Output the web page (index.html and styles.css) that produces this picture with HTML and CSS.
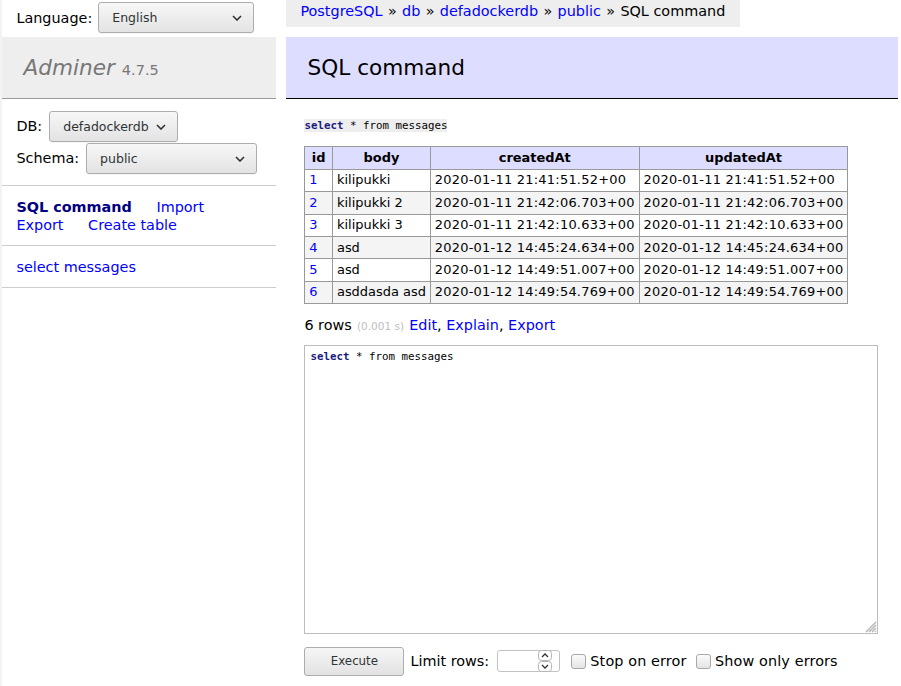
FILE: index.html
```html
<!DOCTYPE html>
<html lang="en">
<head>
<meta charset="utf-8">
<title>SQL command - defadockerdb - Adminer</title>
<link rel="stylesheet" href="styles.css">
</head>
<body>
<div class="page">
  <aside class="menu">
    <div class="lang">
      <span class="lang-label">Language:</span>
      <span class="select-wrap select-lang">
        <select><option>English</option></select>
        <svg class="chev" width="10" height="6" viewBox="0 0 10 6"><path d="M1 1 L5 5 L9 1" fill="none" stroke="#2e3436" stroke-width="1.6"/></svg>
      </span>
    </div>
    <h1 class="logo"><span class="logo-name">Adminer</span> <span class="version">4.7.5</span></h1>
    <div class="dbs">
      <div class="dbs-row"><span>DB:</span>
        <span class="select-wrap select-db">
          <select><option>defadockerdb</option></select>
          <svg class="chev" width="10" height="6" viewBox="0 0 10 6"><path d="M1 1 L5 5 L9 1" fill="none" stroke="#2e3436" stroke-width="1.6"/></svg>
        </span>
      </div>
      <div class="dbs-row"><span>Schema:</span>
        <span class="select-wrap select-schema">
          <select><option>public</option></select>
          <svg class="chev" width="10" height="6" viewBox="0 0 10 6"><path d="M1 1 L5 5 L9 1" fill="none" stroke="#2e3436" stroke-width="1.6"/></svg>
        </span>
      </div>
    </div>
    <p class="links"><a href="#" class="active">SQL command</a> <a href="#">Import</a> <a href="#">Export</a> <a href="#">Create table</a></p>
    <ul class="tables"><li><a href="#">select</a> <a href="#">messages</a></li></ul>
  </aside>

  <main class="content">
    <div class="breadcrumb"><a href="#">PostgreSQL</a> <span class="sep">»</span> <a href="#">db</a> <span class="sep">»</span> <a href="#">defadockerdb</a> <span class="sep">»</span> <a href="#">public</a> <span class="sep">»</span> SQL command</div>
    <h2 class="title">SQL command</h2>
    <div class="body">
      <pre class="sql"><code><span class="kw">select</span> * from messages</code></pre>
      <table class="result">
        <thead>
          <tr><th>id</th><th>body</th><th>createdAt</th><th>updatedAt</th></tr>
        </thead>
        <tbody>
          <tr><td><a href="#">1</a></td><td>kilipukki</td><td class="date">2020-01-11 21:41:51.52+00</td><td class="date">2020-01-11 21:41:51.52+00</td></tr>
          <tr><td><a href="#">2</a></td><td>kilipukki 2</td><td class="date">2020-01-11 21:42:06.703+00</td><td class="date">2020-01-11 21:42:06.703+00</td></tr>
          <tr><td><a href="#">3</a></td><td>kilipukki 3</td><td class="date">2020-01-11 21:42:10.633+00</td><td class="date">2020-01-11 21:42:10.633+00</td></tr>
          <tr><td><a href="#">4</a></td><td>asd</td><td class="date">2020-01-12 14:45:24.634+00</td><td class="date">2020-01-12 14:45:24.634+00</td></tr>
          <tr><td><a href="#">5</a></td><td>asd</td><td class="date">2020-01-12 14:49:51.007+00</td><td class="date">2020-01-12 14:49:51.007+00</td></tr>
          <tr><td><a href="#">6</a></td><td>asddasda asd</td><td class="date">2020-01-12 14:49:54.769+00</td><td class="date">2020-01-12 14:49:54.769+00</td></tr>
        </tbody>
      </table>
      <p class="rows">6 rows <span class="time">(0.001 s)</span> <a href="#">Edit</a>, <a href="#">Explain</a>, <a href="#">Export</a></p>
      <div class="sqlarea-wrap">
        <div class="sqlarea" contenteditable="true"><span class="kw">select</span> * from messages</div>
        <svg class="grip" width="14" height="14" viewBox="0 0 14 14">
          <path d="M13 3 L3 13 M13 6 L6 13 M13 9 L9 13 M13 12 L12 13" stroke="#b8b8b8" stroke-width="1.5" fill="none"/>
        </svg>
      </div>
      <div class="footer">
        <button type="button" class="btn">Execute</button>
        <span class="limit-label">Limit rows:</span>
        <span class="num">
          <input type="text" value="">
          <svg class="spin" width="14" height="22" viewBox="0 0 14 22">
            <rect x="0.5" y="0.5" width="13" height="10" rx="3" fill="#fff" stroke="#b5b5b5"/>
            <rect x="0.5" y="11.5" width="13" height="10" rx="3" fill="#fff" stroke="#b5b5b5"/>
            <path d="M4 7 L7 4 L10 7" fill="none" stroke="#2e3436" stroke-width="1.3"/>
            <path d="M4 15 L7 18 L10 15" fill="none" stroke="#2e3436" stroke-width="1.3"/>
          </svg>
        </span>
        <label class="check"><input type="checkbox"><span>Stop on error</span></label>
        <label class="check"><input type="checkbox"><span>Show only errors</span></label>
      </div>
    </div>
  </main>
</div>
</body>
</html>
```

FILE: styles.css
```css
* { box-sizing: border-box; }

html, body {
  margin: 0;
  padding: 0;
}

body {
  font: 14.4px/1.25 "DejaVu Sans", Verdana, sans-serif;
  color: #000;
  background: #fff;
  overflow: hidden;
}

a {
  color: blue;
  text-decoration: none;
}

.page {
  display: flex;
  align-items: flex-start;
  height: 686px;
  border-left: 2px solid #f3f3f3;
}

/* ---------- sidebar ---------- */
.menu {
  width: 274px;
  flex: none;
}

.lang {
  display: flex;
  align-items: center;
  gap: 6px;
  padding: 2px 14.4px 3.8px;
  height: 36.8px;
}

.select-wrap {
  position: relative;
  display: inline-block;
  height: 31px;
}

.select-wrap select {
  appearance: none;
  -webkit-appearance: none;
  height: 31px;
  width: 100%;
  margin: 0;
  padding: 0 24px 0 13px;
  border: 1px solid #adadad;
  border-radius: 3px;
  background: linear-gradient(#f7f7f7, #e3e3e3);
  font: 12.5px "DejaVu Sans", Verdana, sans-serif;
  color: #2e3436;
  box-shadow: 0 1px 0 rgba(0,0,0,0.04);
}

.select-wrap .chev {
  position: absolute;
  right: 12px;
  top: 13px;
  pointer-events: none;
}

.select-lang { width: 156px; }
.select-db { width: 129px; }
.select-schema { width: 171px; }

.logo {
  margin: 0;
  height: 62.56px;
  font-size: 21.6px;
  line-height: 27px;
  font-weight: normal;
  padding: 17.28px 21.6px;
  background: #eee;
  border-bottom: 1px solid #999;
  color: #777;
  white-space: nowrap;
}

.logo-name { font-style: italic; }

.version {
  font-size: 14.5px;
  line-height: 1;
  color: #777;
}

.dbs {
  display: flex;
  flex-direction: column;
  gap: 1px;
  padding: 11.52px 14.4px;
  border-bottom: 1px solid #ccc;
}

.dbs-row {
  display: flex;
  align-items: center;
  gap: 7px;
}

.links {
  margin: 0;
  padding: 11.52px 14.4px;
  border-bottom: 1px solid #ccc;
}

.links a {
  white-space: nowrap;
  margin-right: 20px;
}

.links a.active {
  font-weight: bold;
  color: navy;
}

.tables {
  list-style: none;
  margin: 0;
  padding: 11.52px 14.4px;
  border-bottom: 1px solid #ccc;
  white-space: nowrap;
}

/* ---------- content ---------- */
.content {
  margin-left: 10px;
  width: 612px;
  flex: none;
}

.breadcrumb {
  width: fit-content;
  height: 26.8px;
  line-height: 22px;
  padding: 0 14.4px;
  background: #eee;
  white-space: nowrap;
}

.breadcrumb .sep {
  margin: 0 0.75px;
}

.title {
  margin: 10px 0 20px;
  font-size: 21.6px;
  line-height: 27px;
  font-weight: normal;
  padding: 17.28px 21.6px;
  background: #ddf;
  border-bottom: 1px solid #000;
  color: #000;
}

.body {
  padding-left: 18.4px;
}

.sql {
  margin: 0;
  font: 10.8px/13.4px "DejaVu Sans Mono", monospace;
}

.sql code {
  background: #eee;
  font: inherit;
}

.kw {
  color: #1a1a80;
  font-weight: bold;
}

.result {
  margin-top: 13.5px;
  border-collapse: collapse;
  font-size: 12.96px;
  line-height: 16.2px;
}

.result td,
.result th {
  border: 1px solid #999;
  padding: 2.62px 3.9px;
  white-space: nowrap;
}

.result td.date {
  letter-spacing: 0.24px;
}

.result thead th {
  background: #ddf;
  text-align: center;
  padding: 2.62px 6.48px;
}

.result tbody tr:nth-child(2n) {
  background: #f4f4f4;
}

.rows {
  margin: 11.52px 0 0;
}

.time {
  color: silver;
  font-size: 10.5px;
  margin: 0 0.6px;
}

.sqlarea-wrap {
  position: relative;
  margin-top: 11.52px;
  width: 574px;
  height: 289px;
}

.sqlarea {
  width: 100%;
  height: 100%;
  border: 1px solid #bdbdbd;
  padding: 4px 5px;
  font: 10.8px/13.4px "DejaVu Sans Mono", monospace;
  white-space: pre;
  overflow: hidden;
  outline: none;
}

.sqlarea-wrap .grip {
  position: absolute;
  right: 1px;
  bottom: 1px;
}

.footer {
  display: flex;
  align-items: center;
  margin-top: 12.5px;
  height: 29px;
}

.btn {
  width: 100px;
  height: 29px;
  margin: 0;
  padding: 0;
  border: 1px solid #adadad;
  border-radius: 3px;
  background: linear-gradient(#f6f6f6, #e2e2e2);
  font: 11.8px "DejaVu Sans", Verdana, sans-serif;
  color: #2e3436;
}

.limit-label {
  margin-left: 6px;
}

.num {
  position: relative;
  display: inline-block;
  margin-left: 7.7px;
  width: 63px;
  height: 22px;
}

.num input {
  width: 100%;
  height: 100%;
  margin: 0;
  border: 1px solid #c2c2c2;
  border-radius: 3px;
  background: #fff;
  padding: 0 22px 0 4px;
  font: 12.5px "DejaVu Sans", sans-serif;
}

.num .spin {
  position: absolute;
  right: 8px;
  top: 0;
}

.check {
  display: flex;
  align-items: center;
  gap: 4px;
  margin-left: 11.5px;
}

.check span {
  letter-spacing: 0.12px;
}

.check + .check {
  margin-left: 9.5px;
}

.check input {
  appearance: none;
  -webkit-appearance: none;
  width: 15px;
  height: 15px;
  margin: 0;
  border: 1px solid #a8a8a8;
  border-radius: 3px;
  background: linear-gradient(#fbfbfb, #e4e4e4);
}
```
